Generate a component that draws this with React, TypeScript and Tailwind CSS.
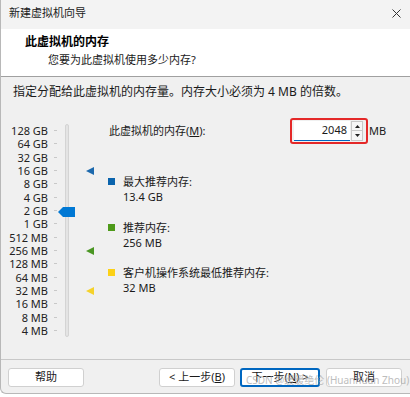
import React from 'react'

const font = { fontFamily: '"Segoe UI", "Noto Sans", "Noto Sans CJK SC", sans-serif' }

const scale = [
  '128 GB', '64 GB', '32 GB', '16 GB', '8 GB', '4 GB', '2 GB', '1 GB',
  '512 MB', '256 MB', '128 MB', '64 MB', '32 MB', '16 MB', '8 MB', '4 MB',
]

// which rows carry a marker arrow
const markers: Record<number, string> = { 3: '#1c69ad', 9: '#4a9623', 12: '#f5d22a' }

function Arrow({ color }: { color: string }) {
  return (
    <svg width="8" height="8" viewBox="0 0 8 8">
      <polygon points="0,4 8,0 8,8" fill={color} />
    </svg>
  )
}

function Legend({ color, label, value }: { color: string; label: string; value: string }) {
  return (
    <div className="flex items-start">
      <div className="w-[7px] h-[7px] mt-[4px]" style={{ background: color }} />
      <div className="ml-[8px] flex flex-col leading-[15px]">
        <span>{label}</span>
        <span>{value}</span>
      </div>
    </div>
  )
}

function Button({ children, focused }: { children: React.ReactNode; focused?: boolean }) {
  return (
    <button
      className={`h-[19px] flex items-center justify-center rounded-[3px] bg-white text-[11px] text-[#1a1a1a] ${
        focused ? 'w-[80px] border-2 border-[#0067c0]' : 'w-[76px] border border-[#d0d0d0]'
      }`}
    >
      {children}
    </button>
  )
}

export default function App() {
  return (
    <div className="w-[410px] h-[397px] bg-white overflow-hidden" style={font}>
      <div className="relative h-[394px] flex flex-col bg-[#f0f0f0] border-l border-b border-[#b8b8b8] rounded-bl-[6px] text-[11px] text-[#1a1a1a]">
        {/* title bar */}
        <div className="h-[29px] flex items-center justify-between bg-[#f3f3f3] pl-[8px] pr-[9px] pb-[2px]">
          <span className="text-[11px]">新建虚拟机向导</span>
          <svg width="9" height="9" viewBox="0 0 9 9">
            <path d="M0.5 0.5 L8.5 8.5 M8.5 0.5 L0.5 8.5" stroke="#333" strokeWidth="1" />
          </svg>
        </div>

        {/* header */}
        <div className="h-[48px] bg-white border-b border-[#a0a0a0] flex flex-col pt-[5px]">
          <span className="pl-[24px] text-[12px] font-bold leading-[15px] text-black">此虚拟机的内存</span>
          <span className="pl-[47px] mt-[3px] leading-[15px]">您要为此虚拟机使用多少内存?</span>
        </div>

        {/* body */}
        <div className="flex-1 flex flex-col">
          <div className="pl-[12px] pt-[7px] text-[12px] leading-[15px]">
            指定分配给此虚拟机的内存量。内存大小必须为 4 MB 的倍数。
          </div>

          <div className="flex items-start mt-[19px]">
            {/* scale labels */}
            <div className="flex flex-col w-[47px] pt-[6px] text-right text-[#222]">
              {scale.map(s => (
                <div key={s} className="h-[13.333px] leading-[13.333px] whitespace-nowrap">{s}</div>
              ))}
            </div>
            {/* ticks */}
            <div className="flex flex-col ml-[6px] w-[3px] pt-[6px]">
              {scale.map(s => (
                <div key={s} className="h-[13.333px] flex items-center">
                  <div className="w-[3px] h-[1px] bg-[#c8c8c8]" />
                </div>
              ))}
            </div>
            {/* track */}
            <div className="relative ml-[8px] mt-[6px] w-[4px] h-[213px] bg-[#e4e4e4] border border-[#d4d4d4] rounded-[2px]">
              <svg className="absolute left-[-8px] top-[82px]" width="17" height="10" viewBox="0 0 17 10">
                <polygon points="0,5 5,0 17,0 17,10 5,10" fill="#0078d4" />
              </svg>
            </div>
            {/* markers */}
            <div className="flex flex-col ml-[17px] w-[8px] pt-[6px]">
              {scale.map((s, i) => (
                <div key={s} className="h-[13.333px] flex items-center">
                  {markers[i] && <Arrow color={markers[i]} />}
                </div>
              ))}
            </div>

            {/* right panel */}
            <div className="flex flex-col ml-[14px]">
              <div className="flex items-center h-[26px]">
                <span className="w-[182px] pl-[1px]">
                  此虚拟机的内存(<u>M</u>):
                </span>
                <div className="w-[78px] h-[26px] border-2 border-[#e42828] rounded-[3px] flex items-center pl-[2px]">
                  <div className="w-[56px] h-[20px] bg-white border-b border-[#0067c0] flex items-center justify-end pr-[3px]">
                    2048
                  </div>
                  <div className="ml-[1px] flex flex-col w-[12px] h-[20px]">
                    <div className="h-[10px] flex items-center justify-center bg-[#f6f6f6] border border-[#c8c8c8]">
                      <svg width="5" height="3" viewBox="0 0 5 3"><polygon points="2.5,0 5,3 0,3" fill="#222" /></svg>
                    </div>
                    <div className="h-[10px] flex items-center justify-center bg-[#f6f6f6] border border-t-0 border-[#c8c8c8]">
                      <svg width="5" height="3" viewBox="0 0 5 3"><polygon points="0,0 5,0 2.5,3" fill="#222" /></svg>
                    </div>
                  </div>
                </div>
                <span className="ml-[1px]">MB</span>
              </div>

              <div className="mt-[30px]">
                <Legend color="#0a64ad" label="最大推荐内存:" value="13.4 GB" />
              </div>
              <div className="mt-[16px]">
                <Legend color="#4e9a1a" label="推荐内存:" value="256 MB" />
              </div>
              <div className="mt-[15px]">
                <Legend color="#fcd116" label="客户机操作系统最低推荐内存:" value="32 MB" />
              </div>
            </div>
          </div>
        </div>

        {/* footer */}
        <div className="h-[34px] border-t border-[#c8c8c8] flex items-start pt-[8px] pl-[7px]">
          <Button>帮助</Button>
          <div className="ml-[75px] flex items-center gap-[5px]">
            <Button>&lt; 上一步(<u>B</u>)</Button>
            <Button focused>下一步(<u>N</u>) &gt;</Button>
          </div>
          <div className="ml-[6px]">
            <Button>取消</Button>
          </div>
        </div>

        <span className="absolute left-[245px] top-[373px] text-[10px] text-[#a8a8a8] opacity-75 whitespace-nowrap pointer-events-none">
          CSDN @缓缓绝伦 (Huanhuan Zhou)
        </span>
      </div>
    </div>
  )
}
